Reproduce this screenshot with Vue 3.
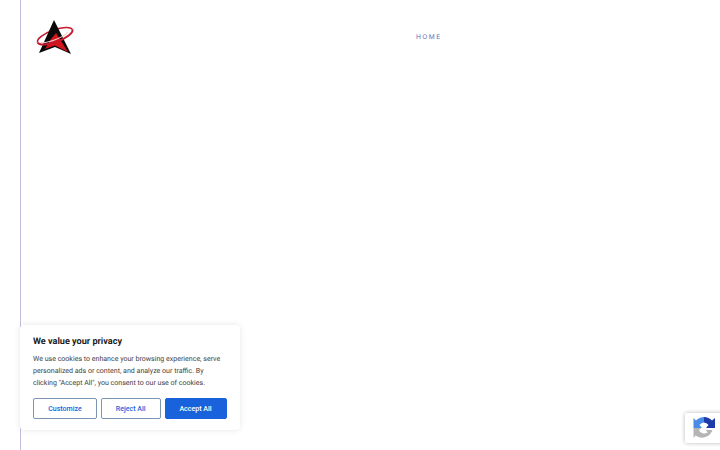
<script setup>
const cookieText = 'We use cookies to enhance your browsing experience, serve personalized ads or content, and analyze our traffic. By clicking "Accept All", you consent to our use of cookies.'
</script>

<template>
  <div class="page">
    <header class="header">
      <svg class="logo" width="36" height="36" viewBox="0 0 36 36" aria-label="logo">
        <g transform="rotate(-20 18 17)">
          <path d="M-0.5 17 A18.5 6 0 0 1 36.5 17" fill="none" stroke="#c8162a" stroke-width="1.6" />
        </g>
        <path d="M17 1 L34 35 L18 28 L2 34 Z" fill="#0a0a0a" />
        <path d="M19 14 L31 33 L18 26.5 L8 30 L14 20 Z" fill="#d5141b" />
        <g transform="rotate(-20 18 17)">
          <path d="M-0.5 17 A18.5 6 0 0 0 36.5 17" fill="none" stroke="#c8162a" stroke-width="2" />
          <path d="M3 18.5 A15.5 4 0 0 0 31 18" fill="none" stroke="#f0c4c8" stroke-width="1.1" />
        </g>
      </svg>
      <nav class="nav"><a class="nav-link">HOME</a></nav>
    </header>

    <aside class="cookie">
      <h2 class="cookie-title">We value your privacy</h2>
      <p class="cookie-text">{{ cookieText }}</p>
      <div class="cookie-actions">
        <button class="btn outline customize">Customize</button>
        <button class="btn outline reject">Reject All</button>
        <button class="btn solid accept">Accept All</button>
      </div>
    </aside>

    <div class="recaptcha">
      <svg width="24" height="24" viewBox="0 0 24 24" aria-label="reCAPTCHA">
        <path d="M12 1 A11 11 0 0 0 4 4.5 L1.5 2 L1.5 12 L10 12 L7.5 9 A6 6 0 0 1 12 6.5 Z" fill="#4a8be8" />
        <path d="M12 1 A11 11 0 0 1 20 4.5 L23 2 L23 12 L14 12 L16.5 9 A6 6 0 0 0 12 6.5 Z" fill="#1c3aa9" />
        <path d="M1.5 12 L9 12 L7 14.5 A6 6 0 0 0 15.5 16.5 L14 14 L20.5 14 A11 11 0 0 1 3.5 19.5 L1.5 22 Z" fill="#b5b5b5" />
      </svg>
    </div>
  </div>
</template>

<style>
html, body { margin: 0; background: #fff; }
</style>

<style scoped>
.page {
  position: relative;
  width: 720px;
  height: 450px;
  overflow: hidden;
  background: #fff;
  font-family: Roboto, "Liberation Sans", sans-serif;
  text-rendering: geometricPrecision;
}
.page::before {
  content: "";
  position: absolute;
  left: 20px;
  top: 0;
  bottom: 0;
  width: 1px;
  background: #c6bede;
}
.header {
  display: flex;
  align-items: flex-start;
  padding: 19px 0 0 37px;
}
.logo { flex: none; overflow: visible; }
.nav { margin-left: 343px; padding-top: 13px; }
.nav-link {
  display: block;
  font-family: Inter, "Liberation Sans", sans-serif;
  font-size: 6.6px;
  line-height: 10px;
  letter-spacing: 1.45px;
  color: #5c6bb8;
}
.cookie {
  position: absolute;
  left: 20px;
  top: 325px;
  width: 220px;
  height: 105px;
  box-sizing: border-box;
  padding: 11px 13px 0;
  background: #fff;
  border-radius: 4px;
  box-shadow: 0 0 6px rgba(0, 0, 0, 0.1);
}
.cookie-title {
  margin: 0 0 5px;
  font-size: 9.1px;
  line-height: 12px;
  font-weight: 700;
  color: #212121;
}
.cookie-text {
  margin: 0;
  font-size: 7.05px;
  line-height: 12px;
  color: #3f3f3f;
  width: 194px;
}
.cookie-actions {
  display: flex;
  gap: 4px;
  margin-top: 8.5px;
}
.btn {
  box-sizing: border-box;
  height: 21.5px;
  padding: 0;
  border-radius: 2px;
  font-family: Roboto, "Liberation Sans", sans-serif;
  font-size: 7.05px;
  font-weight: 500;
  cursor: pointer;
}
.outline { background: #fff; color: #1863dc; border: 1.5px solid #7b95b5; }
.solid { background: #1863dc; color: #fff; border: 1px solid #1863dc; }
.customize { width: 64px; }
.reject { width: 59.5px; }
.accept { width: 62px; }
.recaptcha {
  position: absolute;
  left: 685px;
  top: 413px;
  width: 40px;
  height: 30px;
  box-sizing: border-box;
  padding: 3px 0 0 7px;
  background: #fff;
  border-radius: 2px;
  box-shadow: 0 0 4px rgba(0, 0, 0, 0.28);
}
</style>
